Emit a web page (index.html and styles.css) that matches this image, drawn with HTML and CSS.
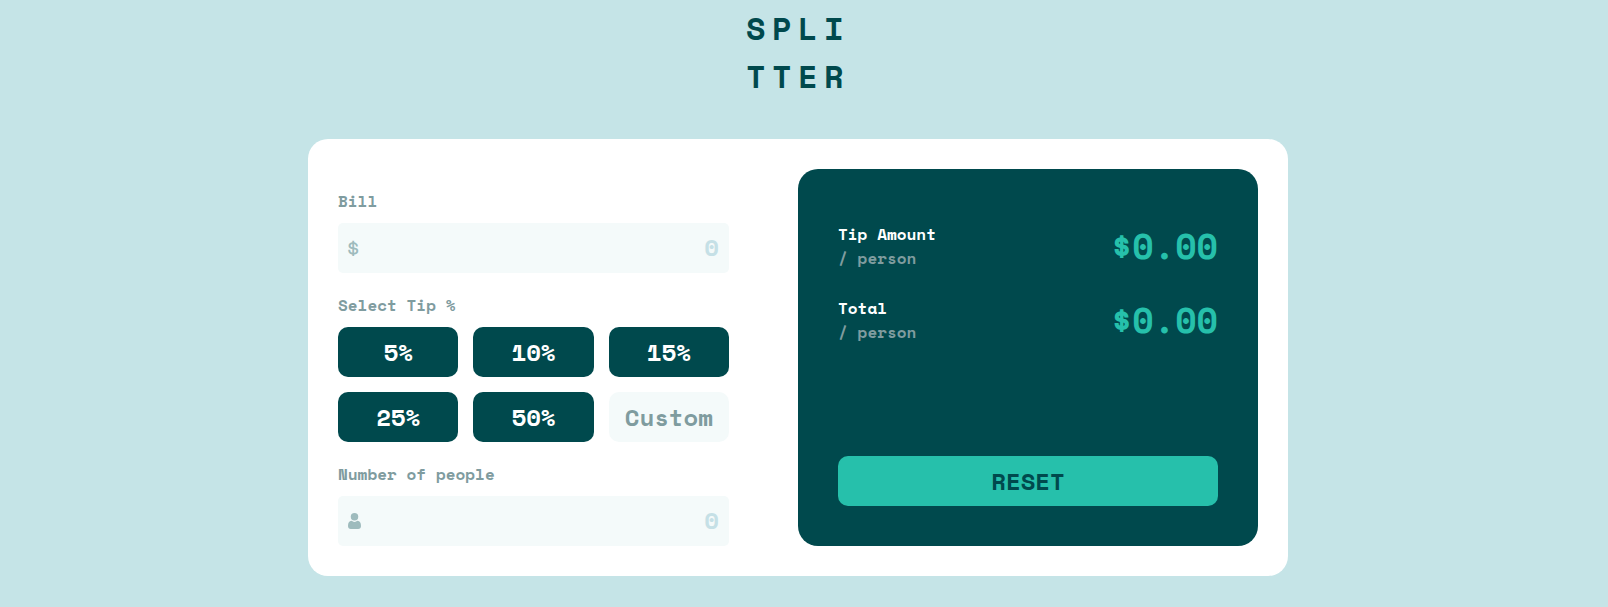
FILE: index.html
```html
<!DOCTYPE html>
<html lang="en">
<head>
<meta charset="utf-8">
<title>Splitter</title>
<link rel="stylesheet" href="styles.css">
</head>
<body>
<h1 class="logo">SPLI<br>TTER</h1>
<main class="card">
  <form class="form">
    <section class="group">
      <label class="label" for="bill">Bill</label>
      <div class="field">
        <span class="dollar">$</span>
        <input class="input" id="bill" type="text" placeholder="0">
      </div>
    </section>
    <section class="group">
      <span class="label">Select Tip %</span>
      <div class="tips">
        <button class="tip" type="button">5%</button>
        <button class="tip" type="button">10%</button>
        <button class="tip" type="button">15%</button>
        <button class="tip" type="button">25%</button>
        <button class="tip" type="button">50%</button>
        <button class="tip tip-custom" type="button">Custom</button>
      </div>
    </section>
    <section class="group">
      <label class="label" for="people">Number of people</label>
      <div class="field">
        <svg class="person" width="13" height="16" viewBox="0 0 13 16"><circle cx="6.5" cy="3.8" r="3.75"/><path d="M3.4 7.8C1.2 7.9 0 9.6 0 13.1 0 14.9 1.1 16 2.8 16h7.4c1.7 0 2.8-1.1 2.8-2.9 0-3.5-1.2-5.2-3.4-5.3-.6 0-1.5 1.1-3.1 1.1S4 7.8 3.4 7.8z"/></svg>
        <input class="input" id="people" type="text" placeholder="0">
      </div>
    </section>
  </form>
  <section class="panel">
    <div class="result">
      <div class="caption">Tip Amount<span class="per">/ person</span></div>
      <output class="amount">$0.00</output>
    </div>
    <div class="result">
      <div class="caption">Total<span class="per">/ person</span></div>
      <output class="amount">$0.00</output>
    </div>
    <button class="reset" type="button">RESET</button>
  </section>
</main>
</body>
</html>
```
FILE: styles.css
```css
* { box-sizing: border-box; margin: 0; padding: 0; }

body {
  height: 607px;
  padding: 4px 12px 0 0;
  overflow: hidden;
  background: #c5e4e7;
  color: #00494d;
  font: bold 16px/24px "Space Mono", "Liberation Mono", monospace;
}

button, input {
  border: 0;
  font: inherit;
}

.logo {
  width: 104px;
  margin: 0 auto 39px;
  font-size: 32px;
  line-height: 48px;
  letter-spacing: 6.4px;
}

.card {
  display: flex;
  width: 980px;
  height: 437px;
  margin: 0 auto;
  padding: 30px;
  border-radius: 20px;
  background: #fff;
}

.form { width: 391px; margin-right: 69px; }

.label {
  display: block;
  height: 54px;
  padding-top: 20px;
  color: #7f9c9f;
}

.field {
  display: flex;
  align-items: center;
  height: 50px;
  padding: 0 10px;
  border-radius: 5px;
  background: #f4fafa;
}

.dollar {
  margin-left: -2px;
  color: #9ebbbd;
  font-size: 24px;
  font-weight: 400;
  line-height: 50px;
}

.person { flex: none; fill: #9ebbbd; }

.input {
  flex: 1;
  min-width: 0;
  height: 50px;
  padding-bottom: 2px;
  background: none;
  text-align: right;
  font-size: 24px;
}

.input::placeholder { color: #c5e0e6; }

.tips {
  display: grid;
  grid-template-columns: repeat(3, 1fr);
  gap: 15px;
}

.tip, .reset {
  height: 50px;
  border-radius: 10px;
  background: #00494d;
  color: #fff;
  font-size: 24px;
}

.tip-custom { background: #f4fafa; color: #7f9c9f; }

.panel {
  display: flex;
  flex-direction: column;
  width: 460px;
  padding: 53px 40px 40px;
  border-radius: 20px;
  background: #00494d;
  color: #fff;
}

.result {
  display: flex;
  justify-content: space-between;
  height: 48px;
  margin-bottom: 26px;
}

.per { display: block; color: #7f9c9f; }

.amount {
  color: #26c0ab;
  font-size: 35px;
  line-height: 48px;
}

.reset { margin-top: auto; background: #26c0ab; color: #00494d; }
```
